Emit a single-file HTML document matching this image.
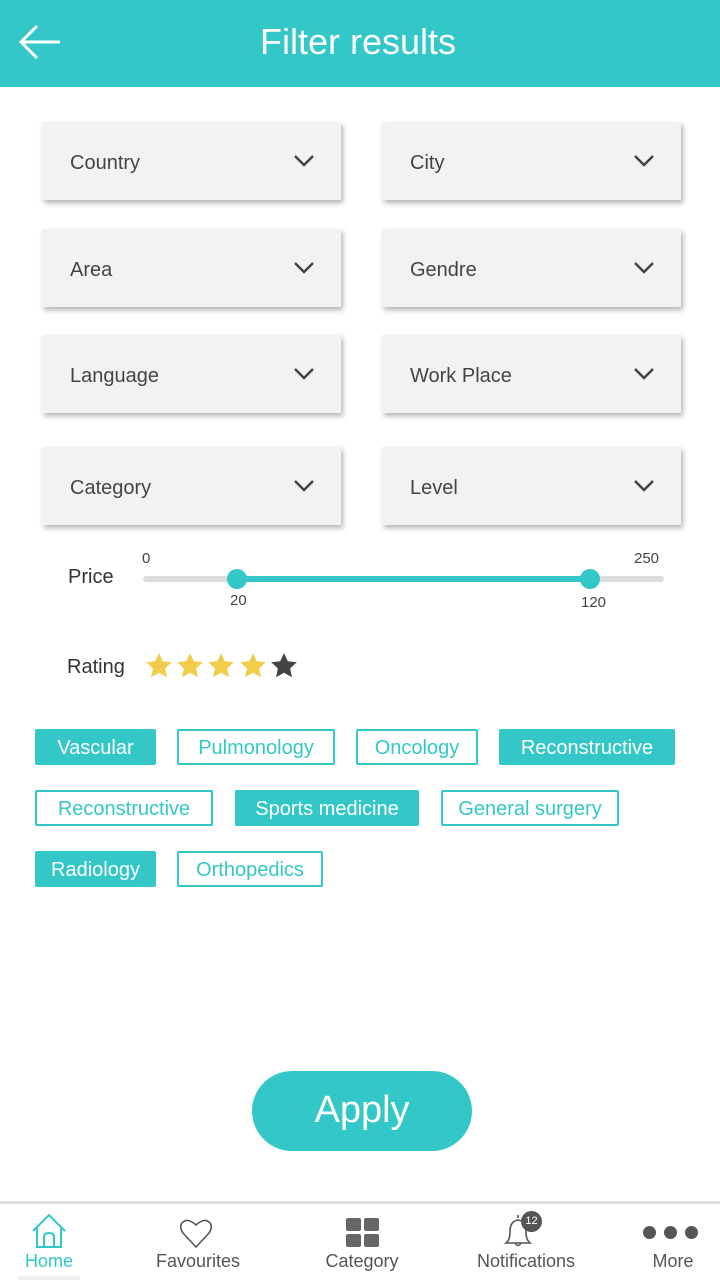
<!DOCTYPE html>
<html><head><meta charset="utf-8"><style>
*{margin:0;padding:0;box-sizing:border-box}
body{width:720px;height:1280px;background:#fff;font-family:"Liberation Sans",sans-serif;position:relative;overflow:hidden;color:#444}
.hdr{position:absolute;left:0;top:0;width:720px;height:87px;background:#33c7c8}
.hdr h1{position:absolute;left:0;width:716px;text-align:center;top:21px;font-weight:normal;font-size:36px;color:#fff}
.card{position:absolute;width:299px;height:78px;background:#f2f2f2;box-shadow:2px 3px 5px rgba(0,0,0,.3);font-size:20px;color:#444}
.card span{position:absolute;left:28px;top:30px}
.card svg{position:absolute;right:26px;top:32px}
.tag{position:absolute;height:36px;border:2px solid #33c7c8;color:#33c7c8;font-size:20px;line-height:34px;text-align:center;border-radius:2px}
.tag.f{background:#33c7c8;color:#fff}
.nav{position:absolute;top:1201px;left:0;width:720px;height:3px;background:#ddd}
.ni{position:absolute;top:1251px;font-size:18px;color:#555;text-align:center;width:140px}
</style></head><body>
<div class="hdr">
<svg style="position:absolute;left:18px;top:24px" width="44" height="36" viewBox="0 0 44 36"><path d="M42 18H3M19 2L3 18l16 16" fill="none" stroke="#fff" stroke-width="3"/></svg>
<h1>Filter results</h1></div>

<div class="card" style="left:42px;top:122px"><span>Country</span><svg width="22" height="14"><path d="M2 2l9 9 9-9" fill="none" stroke="#444" stroke-width="2.5"/></svg></div>
<div class="card" style="left:382px;top:122px"><span>City</span><svg width="22" height="14"><path d="M2 2l9 9 9-9" fill="none" stroke="#444" stroke-width="2.5"/></svg></div>
<div class="card" style="left:42px;top:229px"><span>Area</span><svg width="22" height="14"><path d="M2 2l9 9 9-9" fill="none" stroke="#444" stroke-width="2.5"/></svg></div>
<div class="card" style="left:382px;top:229px"><span>Gendre</span><svg width="22" height="14"><path d="M2 2l9 9 9-9" fill="none" stroke="#444" stroke-width="2.5"/></svg></div>
<div class="card" style="left:42px;top:335px"><span>Language</span><svg width="22" height="14"><path d="M2 2l9 9 9-9" fill="none" stroke="#444" stroke-width="2.5"/></svg></div>
<div class="card" style="left:382px;top:335px"><span>Work Place</span><svg width="22" height="14"><path d="M2 2l9 9 9-9" fill="none" stroke="#444" stroke-width="2.5"/></svg></div>
<div class="card" style="left:42px;top:447px"><span>Category</span><svg width="22" height="14"><path d="M2 2l9 9 9-9" fill="none" stroke="#444" stroke-width="2.5"/></svg></div>
<div class="card" style="left:382px;top:447px"><span>Level</span><svg width="22" height="14"><path d="M2 2l9 9 9-9" fill="none" stroke="#444" stroke-width="2.5"/></svg></div>

<div style="position:absolute;left:68px;top:566px;font-size:20px;color:#333">Price</div>
<div style="position:absolute;left:142px;top:550px;font-size:15px">0</div>
<div style="position:absolute;left:634px;top:550px;font-size:15px">250</div>
<div style="position:absolute;left:143px;top:576px;width:521px;height:6px;border-radius:3px;background:#ddd"></div>
<div style="position:absolute;left:237px;top:576px;width:353px;height:6px;background:#33c7c8"></div>
<div style="position:absolute;left:227px;top:569px;width:20px;height:20px;border-radius:50%;background:#33c7c8"></div>
<div style="position:absolute;left:580px;top:569px;width:20px;height:20px;border-radius:50%;background:#33c7c8"></div>
<div style="position:absolute;left:230px;top:592px;font-size:15px">20</div>
<div style="position:absolute;left:581px;top:594px;font-size:15px">120</div>

<div style="position:absolute;left:67px;top:656px;font-size:20px;color:#333">Rating</div>
<svg style="position:absolute;left:145px;top:652px" width="156" height="28" viewBox="0 0 156 28">
<defs><path id="s" d="M14 1l3.8 8.3 9 1-6.7 6.1 1.9 8.9L14 20.8 6 25.3l1.9-8.9L1.2 10.3l9-1z"/></defs>
<use href="#s" fill="#f2cd4a"/><use href="#s" x="31" fill="#f2cd4a"/><use href="#s" x="62" fill="#f2cd4a"/><use href="#s" x="94" fill="#f2cd4a"/><use href="#s" x="125" fill="#444"/></svg>

<div class="tag f" style="left:35px;top:729px;width:121px">Vascular</div>
<div class="tag" style="left:177px;top:729px;width:158px">Pulmonology</div>
<div class="tag" style="left:356px;top:729px;width:122px">Oncology</div>
<div class="tag f" style="left:499px;top:729px;width:176px">Reconstructive</div>
<div class="tag" style="left:35px;top:790px;width:178px">Reconstructive</div>
<div class="tag f" style="left:235px;top:790px;width:184px">Sports medicine</div>
<div class="tag" style="left:441px;top:790px;width:178px">General surgery</div>
<div class="tag f" style="left:35px;top:851px;width:121px">Radiology</div>
<div class="tag" style="left:177px;top:851px;width:146px">Orthopedics</div>

<div style="position:absolute;left:252px;top:1071px;width:220px;height:80px;border-radius:40px;background:#33c7c8;color:#fff;font-size:38px;text-align:center;line-height:78px">Apply</div>

<div class="nav"></div>
<svg style="position:absolute;left:31px;top:1213px" width="36" height="36" viewBox="0 0 36 36"><path d="M2 18L18 2l16 16M6 15v19h24V15M13 34V24q0-4 5-4t5 4v10" fill="none" stroke="#33c7c8" stroke-width="2"/></svg>
<div class="ni" style="left:-21px;color:#33c7c8">Home</div>
<div style="position:absolute;left:18px;top:1276px;width:62px;height:4px;background:#f0f0f0"></div>
<svg style="position:absolute;left:179px;top:1217px" width="34" height="32" viewBox="0 0 34 32"><path d="M17 30L4 16Q0 10 3 6q5-6 14 2q9-8 14-2q3 4-1 10z" fill="none" stroke="#555" stroke-width="1.6"/></svg>
<div class="ni" style="left:128px">Favourites</div>
<div style="position:absolute;left:346px;top:1218px;width:15px;height:13px;background:#666;border-radius:2px"></div>
<div style="position:absolute;left:364px;top:1218px;width:15px;height:13px;background:#666;border-radius:2px"></div>
<div style="position:absolute;left:346px;top:1234px;width:15px;height:13px;background:#666;border-radius:2px"></div>
<div style="position:absolute;left:364px;top:1234px;width:15px;height:13px;background:#666;border-radius:2px"></div>
<div class="ni" style="left:292px">Category</div>
<svg style="position:absolute;left:502px;top:1213px" width="32" height="36" viewBox="0 0 32 36"><path d="M16 2v3M4 30q4-3 4-11q0-11 8-12q8 1 8 12q0 8 4 11zM13 30q3 5 6 0" fill="none" stroke="#555" stroke-width="1.6"/></svg>
<div style="position:absolute;left:521px;top:1211px;width:21px;height:21px;border-radius:50%;background:#555;color:#fff;font-size:11px;text-align:center;line-height:21px">12</div>
<div class="ni" style="left:456px">Notifications</div>
<div style="position:absolute;left:643px;top:1226px;width:13px;height:13px;border-radius:50%;background:#555"></div>
<div style="position:absolute;left:664px;top:1226px;width:13px;height:13px;border-radius:50%;background:#555"></div>
<div style="position:absolute;left:685px;top:1226px;width:13px;height:13px;border-radius:50%;background:#555"></div>
<div class="ni" style="left:603px">More</div>
</body></html>
